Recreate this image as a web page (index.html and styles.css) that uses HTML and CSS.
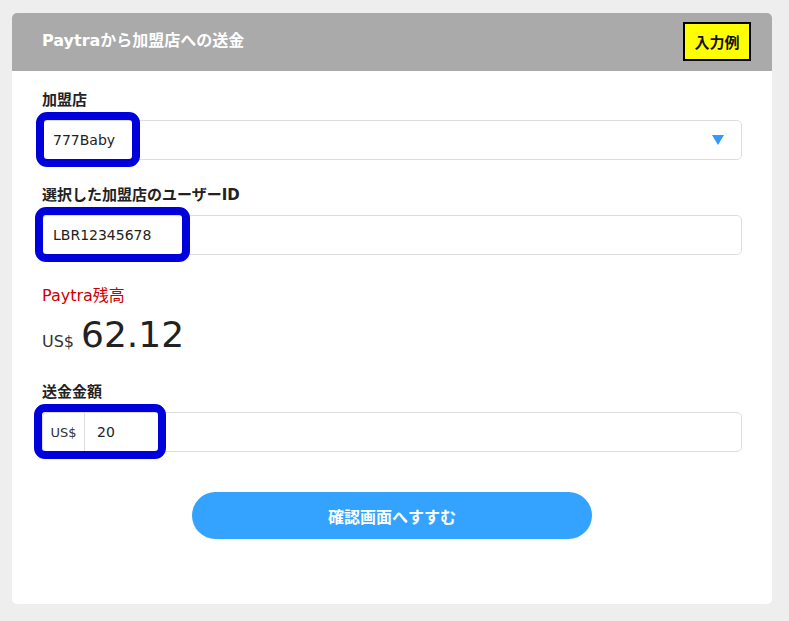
FILE: index.html
```html
<!DOCTYPE html>
<html lang="ja">
<head>
<meta charset="utf-8">
<title>Paytraから加盟店への送金</title>
<link rel="stylesheet" href="styles.css">
</head>
<body>
<div class="card">
  <div class="card-header">
    <h1 class="title">Paytraから加盟店への送金</h1>
    <span class="badge">入力例</span>
  </div>
  <div class="card-body">
    <div class="field">
      <div class="label">加盟店</div>
      <div class="control select">
        <span class="value">777Baby</span>
        <svg class="arrow" width="12" height="10" viewBox="0 0 12 10"><polygon points="0,0 12,0 6,10" fill="#3399ff"/></svg>
        <span class="mark mark-1"></span>
      </div>
    </div>
    <div class="field field-2">
      <div class="label">選択した加盟店のユーザーID</div>
      <div class="control">
        <span class="value">LBR12345678</span>
        <span class="mark mark-2"></span>
      </div>
    </div>
    <div class="balance">
      <div class="balance-label">Paytra残高</div>
      <div class="balance-amount"><span class="cur">US$</span><span class="num">62.12</span></div>
    </div>
    <div class="field field-3">
      <div class="label">送金金額</div>
      <div class="control group">
        <span class="addon">US$</span>
        <span class="value">20</span>
        <span class="mark mark-3"></span>
      </div>
    </div>
    <div class="actions">
      <button class="btn">確認画面へすすむ</button>
    </div>
  </div>
</div>
</body>
</html>
```
FILE: styles.css
```css
* { box-sizing: border-box; }
html, body { margin: 0; }
body {
  background: #eeeeee;
  padding: 13px 17px 17px 12px;
  font-family: "DejaVu Sans", "Noto Sans CJK JP", sans-serif;
  color: #333;
}
.card {
  width: 760px;
  background: #fff;
  border-radius: 5px;
  overflow: hidden;
}
.card-header {
  background: #aaaaaa;
  height: 58px;
  display: flex;
  align-items: center;
  justify-content: space-between;
  padding: 0 21px 0 30px;
}
.title {
  margin: 0;
  font-size: 16px;
  font-weight: bold;
  color: #fff;
  line-height: 20px;
  position: relative;
  top: -1px;
}
.badge {
  background: #ffff00;
  border: 2px solid #000;
  color: #111;
  font-size: 15px;
  font-weight: bold;
  width: 68px;
  height: 39px;
  display: flex;
  align-items: center;
  justify-content: center;
  position: relative;
  top: -1px;
}
.card-body {
  padding: 19px 30px 65px 30px;
}
.label {
  font-size: 15px;
  font-weight: bold;
  line-height: 20px;
  color: #222;
  margin-bottom: 10px;
}
.control {
  position: relative;
  height: 40px;
  border: 1px solid #dddddd;
  border-radius: 5px;
  display: flex;
  align-items: center;
  padding: 0 10px;
  font-size: 14px;
  color: #222;
}
.select { justify-content: space-between; padding-right: 17px; }
.arrow { display: block; }
.field-2 { margin-top: 25px; }
.balance { margin-top: 31px; }
.balance-label {
  color: #cc0000;
  font-size: 16px;
  line-height: 20px;
}
.balance-amount {
  display: flex;
  align-items: baseline;
  gap: 7px;
  height: 61px;
  padding-top: 3px;
  line-height: 52px;
}
.cur { font-size: 16px; }
.num { font-size: 36px; color: #222; }
.field-3 { margin-top: 15px; }
.group { padding: 0; }
.addon {
  width: 42px;
  height: 100%;
  border-right: 1px solid #dddddd;
  display: flex;
  align-items: center;
  justify-content: center;
  font-size: 13px;
  color: #333;
}
.group .value { padding-left: 12px; }
.mark {
  position: absolute;
  border: 8px solid #0000dd;
  border-radius: 11px;
  height: 55px;
  top: -9px;
}
.mark-1 { left: -7px; width: 104px; }
.mark-2 { left: -8px; width: 155px; }
.mark-3 { left: -9px; width: 132px; }
.actions {
  margin-top: 40px;
  display: flex;
  justify-content: center;
}
.btn {
  width: 400px;
  height: 47px;
  border: none;
  border-radius: 24px;
  background: #33a3ff;
  color: #fff;
  font-family: inherit;
  font-size: 16px;
  font-weight: bold;
}
```
